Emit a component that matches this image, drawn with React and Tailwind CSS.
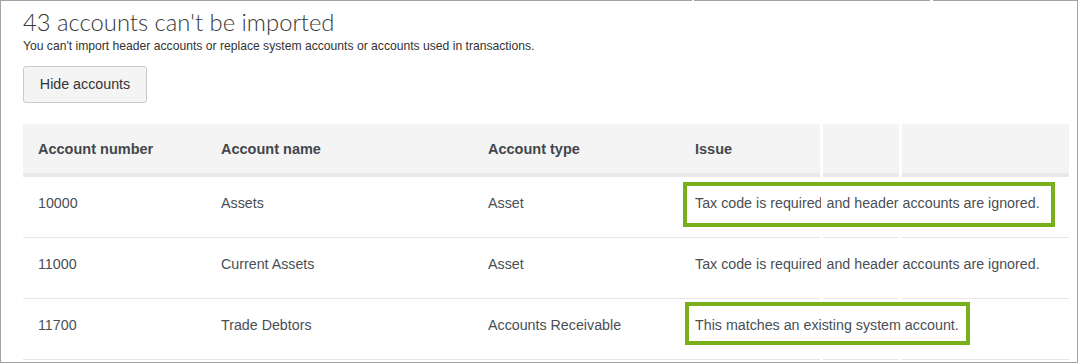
import React from "react";

const rows = [
  { num: "10000", name: "Assets", type: "Asset", issue: "Tax code is required and header accounts are ignored.", cut: true, box: { top: 5, left: 3, w: 372, h: 45 } },
  { num: "11000", name: "Current Assets", type: "Asset", issue: "Tax code is required and header accounts are ignored.", cut: true },
  { num: "11700", name: "Trade Debtors", type: "Accounts Receivable", issue: "This matches an existing system account.", cut: false, box: { top: 3, left: 5, w: 285, h: 43 } },
];

function Row({ r }) {
  return (
    <div className="flex h-[61px]">
      <div className="flex w-[797px] border-b border-[#e6e6e6]">
        <div className="w-[183px] pl-[15px] pt-[18px] leading-4">{r.num}</div>
        <div className="w-[267px] pl-[15px] pt-[18px] leading-4">{r.name}</div>
        <div className="w-[207px] pl-[15px] pt-[18px] leading-4">{r.type}</div>
        <div className="relative w-[140px] pl-[15px] pt-[18px] leading-4 whitespace-nowrap">
          {r.issue}
          {r.box && (
            <div
              className="absolute z-10 border-[4px] border-[#77b01b]"
              style={{ top: r.box.top, left: r.box.left, width: r.box.w, height: r.box.h }}
            />
          )}
        </div>
      </div>
      <div className="relative ml-[3px] w-[76px] border-b border-[#e6e6e6]">
        {r.cut && <div className="absolute -left-[2px] top-0 h-full w-[2px] bg-white" />}
      </div>
      <div className="relative ml-[3px] w-[167px] border-b border-[#e6e6e6]">
        {r.cut && <div className="absolute -left-[2px] top-0 h-full w-[2px] bg-white" />}
      </div>
    </div>
  );
}

export default function App() {
  return (
    <div className="w-[1079px] h-[364px] bg-white">
      <div className="w-[1078px] h-[363px] border-l border-r border-b border-[#a3a3a3] overflow-hidden">
        <div className="flex h-px">
          <div className="w-[691px] bg-[#a3a3a3]" />
          <div className="ml-[2px] w-[236px] bg-[#a3a3a3]" />
          <div className="ml-[3px] flex-1 bg-[#a3a3a3]" />
        </div>
        <div className="pl-[22px]">
          <h1
            className="mt-[5px] text-[23.8px] leading-[32px] font-light text-[#383838]"
            style={{ fontFamily: "Lato, 'Open Sans', sans-serif" }}
          >
            43 accounts can't be imported
          </h1>
          <p
            className="mt-0 text-[12.15px] leading-4 text-[#333]"
            style={{ fontFamily: "'Liberation Sans', Arial, sans-serif" }}
          >
            You can't import header accounts or replace system accounts or accounts used in transactions.
          </p>
          <button
            className="mt-[12px] h-[37px] w-[124px] rounded-[3px] border border-[#cacaca] bg-[#f4f4f4] text-[14.25px] text-[#333]"
            style={{ fontFamily: "'Liberation Sans', Arial, sans-serif" }}
          >
            Hide accounts
          </button>
          <div
            className="mt-[21px] text-[14.25px] text-[#4a4f55]"
            style={{ fontFamily: "'Liberation Sans', Arial, sans-serif" }}
          >
            <div className="flex h-[53px] text-[14.5px] font-bold text-[#43474d]">
              <div className="flex w-[797px] bg-[#f4f4f4] border-b-[4px] border-[#e9e9e9]">
                <div className="w-[183px] pl-[15px] pt-[17px] leading-4">Account number</div>
                <div className="w-[267px] pl-[15px] pt-[17px] leading-4">Account name</div>
                <div className="w-[207px] pl-[15px] pt-[17px] leading-4">Account type</div>
                <div className="w-[140px] pl-[15px] pt-[17px] leading-4">Issue</div>
              </div>
              <div className="ml-[3px] w-[76px] bg-[#f4f4f4] border-b-[4px] border-[#e9e9e9]" />
              <div className="ml-[3px] w-[167px] bg-[#f4f4f4] border-b-[4px] border-[#e9e9e9]" />
            </div>
            {rows.map((r) => (
              <Row key={r.num} r={r} />
            ))}
          </div>
        </div>
      </div>
    </div>
  );
}
